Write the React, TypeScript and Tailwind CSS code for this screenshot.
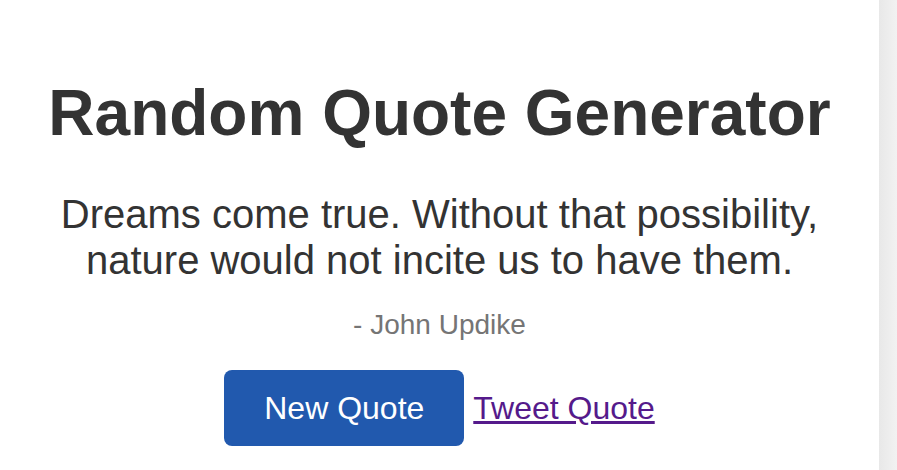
import React, { useState } from 'react';

const quotes = [
  {
    text: 'Dreams come true. Without that possibility, nature would not incite us to have them.',
    author: 'John Updike',
  },
];

export default function App() {
  const [idx, setIdx] = useState(0);
  const quote = quotes[idx];

  return (
    <div className="flex h-[470px] w-full overflow-hidden bg-[#f0f0f0] font-['Liberation_Sans',Arial,sans-serif]">
      {/* card */}
      <div className="flex flex-1 flex-col items-center bg-white px-10 pt-[76px] text-center">
        <h1 className="text-[64px] font-bold leading-[74px] text-[#333333]">Random Quote Generator</h1>
        <p className="mt-[41px] text-[40px] leading-[46px] text-[#333333]">{quote.text}</p>
        <p className="mt-[26px] text-[28px] leading-[32px] text-[#757575]">- {quote.author}</p>
        <div className="mt-[29px] flex items-center gap-[9px]">
          <button
            onClick={() => setIdx((idx + 1) % quotes.length)}
            className="h-[76px] w-[240px] rounded-lg bg-[#2159ae] text-[32px] leading-[37px] text-white"
          >
            New Quote
          </button>
          <a href="#" className="text-[32px] leading-[37px] text-[#551a8b] underline">
            Tweet Quote
          </a>
        </div>
      </div>
      {/* scrollbar-ish strip */}
      <div className="w-[18px] bg-gradient-to-r from-[#e8e8e8] to-[#f2f2f2]" />
    </div>
  );
}
